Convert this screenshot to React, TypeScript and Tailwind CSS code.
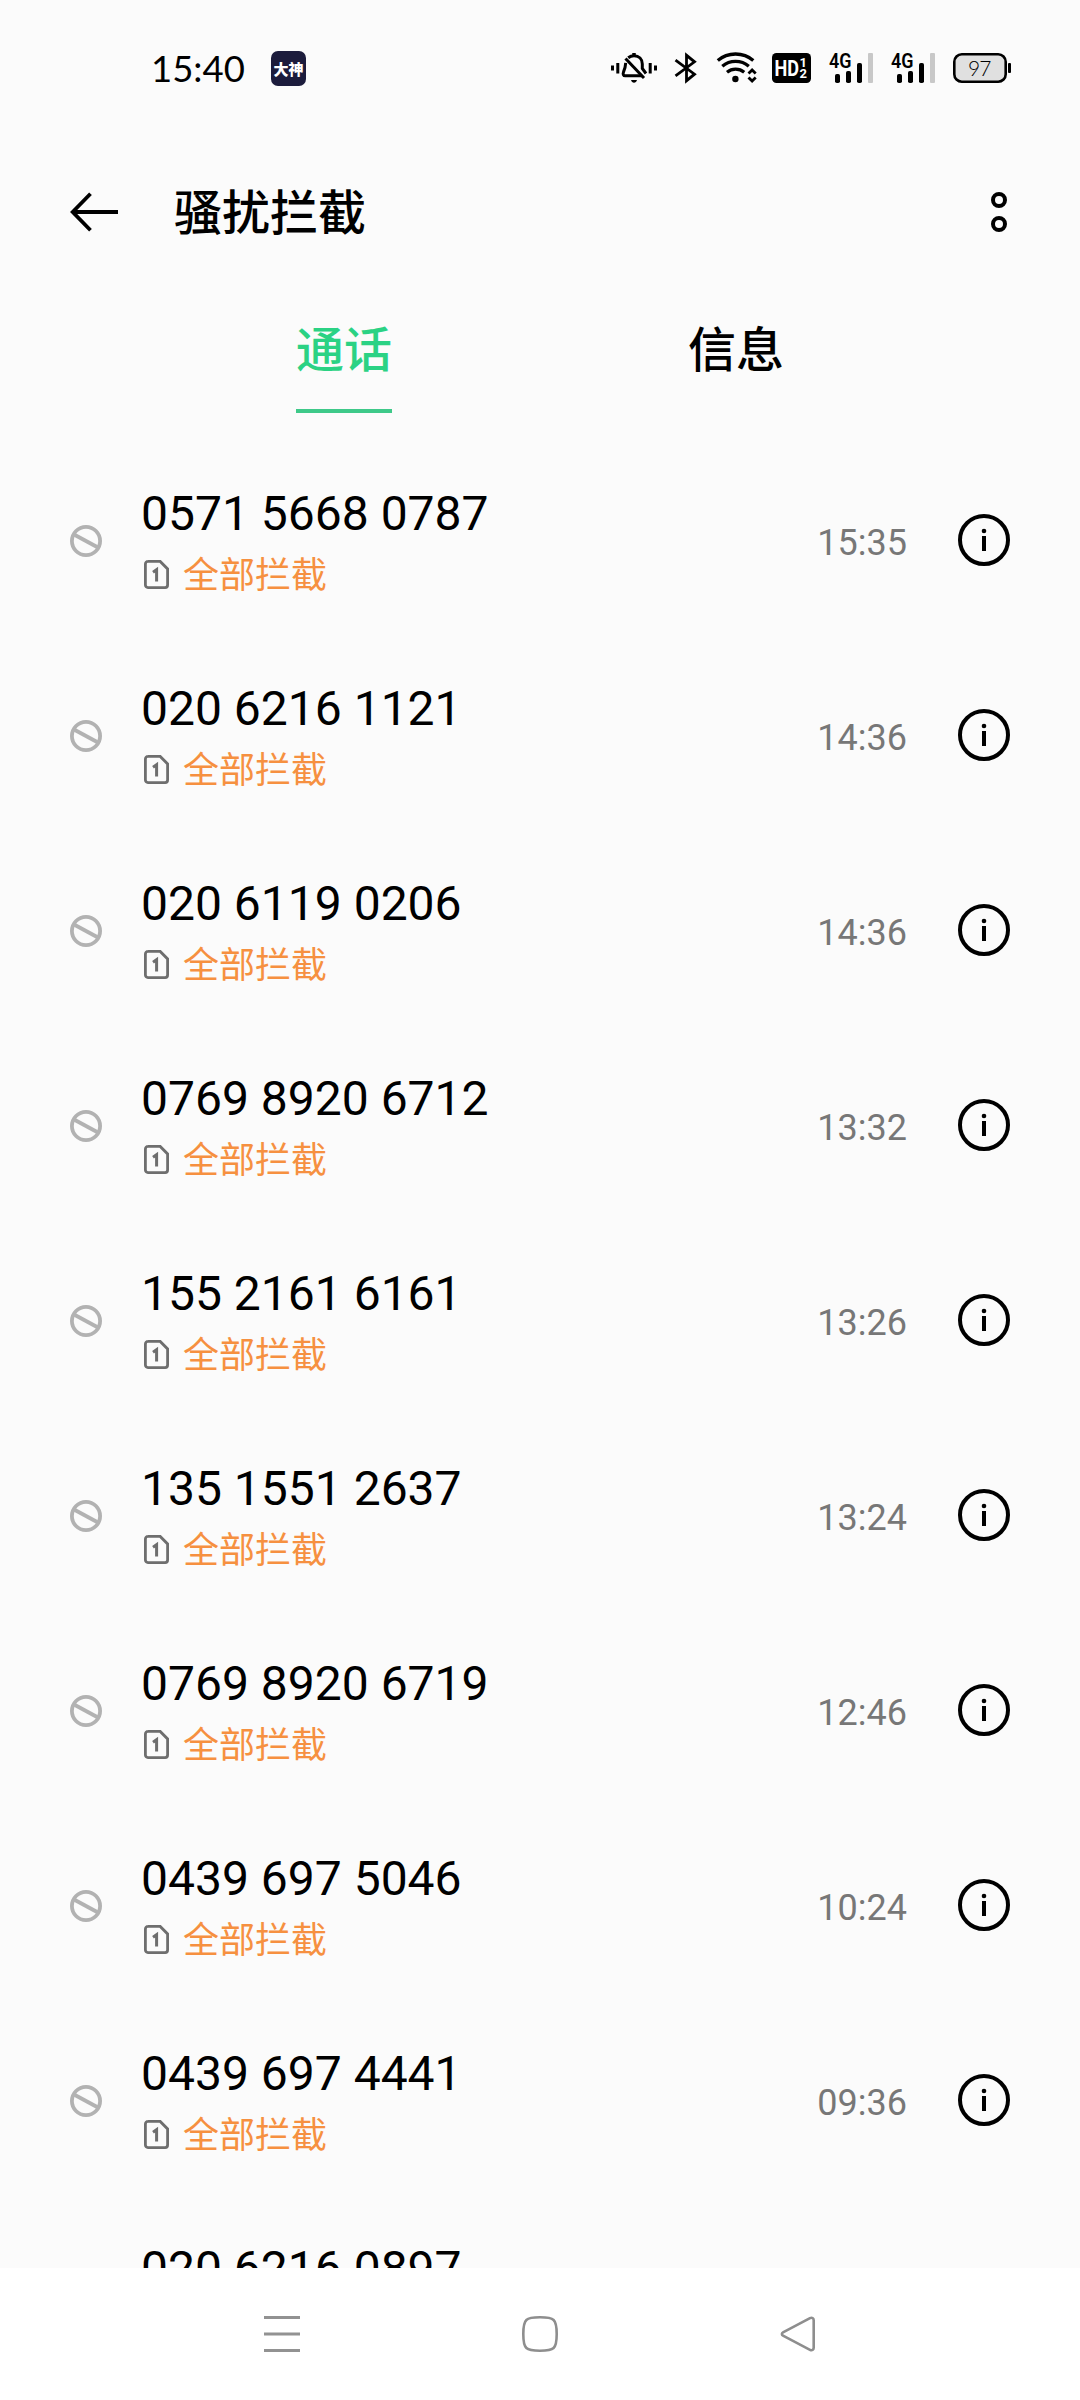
const calls = [
  { number: '0571 5668 0787', time: '15:35' },
  { number: '020 6216 1121', time: '14:36' },
  { number: '020 6119 0206', time: '14:36' },
  { number: '0769 8920 6712', time: '13:32' },
  { number: '155 2161 6161', time: '13:26' },
  { number: '135 1551 2637', time: '13:24' },
  { number: '0769 8920 6719', time: '12:46' },
  { number: '0439 697 5046', time: '10:24' },
  { number: '0439 697 4441', time: '09:36' },
]

function MutedBellIcon() {
  return (
    <svg width="46" height="32" viewBox="0 0 46 32" fill="none" stroke="#000">
      <path d="M1.5 13.5v5M6.8 11v10.5M39.2 11v10.5M44.5 13.5v5" strokeWidth="3" />
      <path d="M14.5 6.5 33 26" strokeWidth="3" />
      <path d="M17.2 5.7c2-1.5 4-2 5.8-2 5 0 8.3 3.5 8.3 8.3v4.5l3.7 5" strokeWidth="3" />
      <path d="M14.7 10.8c-.3 5-1 6.700-2.200 9.200-.8 1.800-.2 3.800 1.700 3.800H31" strokeWidth="3" />
      <path d="M23 1v3" strokeWidth="3.5" />
      <path d="M20 28h6c-.6 1.8-1.600 2.700-3 2.700s-2.400-.9-3-2.700Z" fill="#000" stroke="none" />
    </svg>
  )
}

function BluetoothIcon() {
  return (
    <svg width="24" height="32" viewBox="0 0 24 32" fill="none" stroke="#000" strokeWidth="2.8">
      <path d="m1.5 8.200 19 14-8 6.500V3.300l8 6.500-19 14" />
    </svg>
  )
}

function WifiIcon() {
  return (
    <svg width="42" height="32" viewBox="0 0 42 32" fill="none" stroke="#000" strokeWidth="3.300">
      <path d="M1.8 8.500c10-8.700 25.500-8.700 35.500 0" />
      <path d="M6.300 14.300c7.600-6.500 18.900-6.500 26.500 0" />
      <path d="M11 20.200c5-4 12.200-4 17.200 0" />
      <circle cx="19.4" cy="27" r="3.2" fill="#000" stroke="none" />
      <path d="m32.500 21.500 3.600-3.600 3.600 3.600M32.500 25.500l3.600 3.600 3.600-3.600" strokeWidth="2.8" />
    </svg>
  )
}

function HdBadge() {
  return (
    <svg width="39" height="30" viewBox="0 0 39 30" className="font-['Roboto',sans-serif] font-bold" fill="#fff">
      <rect width="39" height="30" rx="4.5" fill="#000" />
      <text x="2.5" y="22.8" fontSize="22" textLength="24.5" lengthAdjust="spacingAndGlyphs">
        HD
      </text>
      <text x="27.5" y="13.5" fontSize="13">
        1
      </text>
      <text x="27.5" y="25" fontSize="13">
        2
      </text>
    </svg>
  )
}

function SignalIcon() {
  return (
    <svg
      width="45"
      height="32"
      viewBox="0 0 45 32"
      className="overflow-visible font-['Roboto',sans-serif] font-semibold"
    >
      <text x="0" y="15.5" fontSize="19.5" textLength="22.5" lengthAdjust="spacingAndGlyphs">
        4G
      </text>
      <rect x="6" y="22" width="5" height="9" rx="1.8" />
      <rect x="17" y="19" width="5" height="12" rx="1.8" />
      <rect x="28" y="11" width="5" height="20" rx="1.8" />
      <rect x="39" y="1" width="5" height="30" rx="1" fill="#c8c8c8" />
    </svg>
  )
}

function BatteryIcon() {
  return (
    <svg width="59" height="30" viewBox="0 0 59 30">
      <rect x="1.3" y="1.3" width="51.4" height="27.4" rx="7.5" fill="#e0e0e0" stroke="#000" strokeWidth="2.6" />
      <rect x="55" y="10" width="3" height="10" rx="1" />
      <text x="15" y="22.8" fontSize="21" textLength="23.5" className="font-['Lato',sans-serif] font-light">
        97
      </text>
    </svg>
  )
}

function BlockedIcon() {
  return (
    <svg width="32" height="32" viewBox="0 0 32 32" fill="none" stroke="#b2b2b2" strokeWidth="3.8">
      <circle cx="16" cy="16" r="14.1" />
      <path d="m4 9.500 24 13" />
    </svg>
  )
}

function SimIcon() {
  return (
    <svg width="25" height="29" viewBox="0 0 25 29" fill="none" stroke="#6e6e6e">
      <path
        d="M3.800 1.400h12.400l7.400 7.500v16.200a2.500 2.500 0 0 1-2.500 2.500H3.900a2.500 2.500 0 0 1-2.500-2.500V3.900a2.500 2.500 0 0 1 2.500-2.500Z"
        strokeWidth="2.8"
      />
      <path d="M9 12.200 12.600 9.700V21.500" strokeWidth="3" />
    </svg>
  )
}

function InfoIcon() {
  return (
    <svg className="mb-0.5" width="52" height="52" viewBox="0 0 52 52">
      <circle cx="26" cy="26" r="24" fill="none" stroke="#000" strokeWidth="4" />
      <circle cx="26" cy="17" r="2.3" />
      <rect x="24" y="22" width="4" height="15" />
    </svg>
  )
}

function StatusBar() {
  return (
    <header className="flex h-[136px] shrink-0 items-center pr-[68px] pl-[151px]">
      <span className="w-24 font-['Lato',sans-serif] text-[36.5px] leading-none">15:40</span>
      <span className="ml-6 flex size-[35px] items-center justify-center rounded-[7px] bg-[#1c1c3c] text-[15px] leading-none font-black text-white">
        大神
      </span>
      <div className="ml-auto flex items-center">
        <MutedBellIcon />
        <div className="ml-[17px] flex">
          <BluetoothIcon />
        </div>
        <div className="ml-[18px] flex">
          <WifiIcon />
        </div>
        <div className="ml-[14px] flex">
          <HdBadge />
        </div>
        <div className="ml-[18px] flex gap-[17px]">
          <SignalIcon />
          <SignalIcon />
        </div>
        <div className="ml-[17px] flex">
          <BatteryIcon />
        </div>
      </div>
    </header>
  )
}

function TitleBar() {
  return (
    <div className="flex h-[152px] shrink-0 items-center pr-[73px] pl-[70px]">
      <svg width="49" height="40" viewBox="0 0 49 40" fill="none" stroke="#000" strokeWidth="3.8">
        <path d="M48 20H3M20.500 1.700 2.700 20l17.800 18.300" />
      </svg>
      <h1 className="mb-1.5 ml-[55px] text-5xl font-medium">骚扰拦截</h1>
      <svg className="ml-auto" width="16" height="40" viewBox="0 0 16 40" fill="none" stroke="#000" strokeWidth="4">
        <circle cx="8" cy="8" r="6" />
        <circle cx="8" cy="32" r="6" />
      </svg>
    </div>
  )
}

function Tabs() {
  return (
    <nav className="flex h-[125px] shrink-0 gap-[296px] pl-[296px] text-5xl font-medium whitespace-nowrap">
      <button className="flex w-24 flex-col items-center border-b-4 border-[#3ec989] pt-[34px] text-[#2bd284]">
        通话
      </button>
      <button className="flex w-24 flex-col items-center pt-[34px]">信息</button>
    </nav>
  )
}

function CallRow({ number, time }: { number: string; time?: string }) {
  return (
    <li className="flex h-[195px] shrink-0 items-center pr-[70px] pl-[70px]">
      <BlockedIcon />
      <div className="mt-1.5 ml-[39px]">
        <p className="font-['Roboto',sans-serif] text-5xl leading-[60px]">{number}</p>
        <div className="flex h-[60px] items-center">
          <div className="mt-0.5 ml-[3px]">
            <SimIcon />
          </div>
          <span className="mb-[3px] ml-[14px] text-4xl leading-none text-[#f69040]">全部拦截</span>
        </div>
      </div>
      <time className="mt-[5px] mr-[51px] ml-auto font-['Roboto',sans-serif] text-4xl text-[#777]">{time}</time>
      <InfoIcon />
    </li>
  )
}

function NavigationBar() {
  return (
    <footer className="flex h-[132px] shrink-0 items-center gap-[222px] bg-white pl-[264px]">
      <svg width="36" height="36" viewBox="0 0 36 36" stroke="#929292" strokeWidth="3">
        <path d="M0 1.500h36M0 18h36M0 34.500h36" />
      </svg>
      <svg width="36" height="36" viewBox="0 0 36 36" fill="none" stroke="#8e8e8e" strokeWidth="2.6">
        <path d="M18 1.300c14 0 16.700 1.500 16.700 16.700S32 34.700 18 34.700 1.300 33.200 1.300 18 4 1.300 18 1.300Z" />
      </svg>
      <svg width="36" height="36" viewBox="0 0 36 36" fill="none" stroke="#8e8e8e" strokeWidth="2.6">
        <path d="M30 2.200c2-1 3.700 0 3.700 2v27.600c0 2-1.700 3-3.700 2L3 19.700c-1.500-.8-1.500-2.600 0-3.400Z" />
      </svg>
    </footer>
  )
}

export default function App() {
  return (
    <div className="flex h-[2400px] w-[1080px] flex-col overflow-hidden bg-[#fbfbfb] font-['Noto_Sans_CJK_SC',sans-serif] text-black">
      <StatusBar />
      <TitleBar />
      <Tabs />
      <ul className="flex min-h-0 flex-1 flex-col overflow-hidden pt-[30px]">
        {calls.map((call) => (
          <CallRow key={call.number} number={call.number} time={call.time} />
        ))}
        <CallRow number="020 6216 0897" />
      </ul>
      <NavigationBar />
    </div>
  )
}
